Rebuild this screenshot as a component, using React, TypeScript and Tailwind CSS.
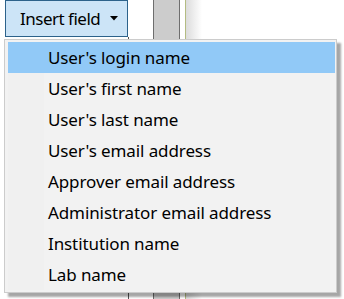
const fields = [
  "User's login name",
  "User's first name",
  "User's last name",
  "User's email address",
  'Approver email address',
  'Administrator email address',
  'Institution name',
  'Lab name',
];

const font = { fontFamily: '"Noto Sans", "Open Sans", sans-serif' };

export default function App() {
  return (
    <div className="relative w-[344px] h-[299px] bg-white overflow-hidden" style={font}>
      {/* window behind the menu */}
      <div className="flex h-full">
        <div className="w-[5px]" />
        <div className="flex flex-col w-[124px]">
          <button className="flex w-[123px] items-center h-[37px] border border-[#2c628b] bg-[#cce4f7] pl-[14px] pr-[9px] text-[17px] tracking-[-0.5px] text-black">
            <span>Insert field</span>
            <svg className="ml-auto" width="8" height="5" viewBox="0 0 8 5">
              <path d="M0 0h8L4 4.5z" fill="#000" />
            </svg>
          </button>
          <div className="flex-1 border-r border-[#555555]" />
        </div>
        <div className="w-[25px] border-r border-[#6e6e6e]" />
        <div className="w-[25px] bg-[#cccccc]" />
        <div className="w-px bg-[#6e6e6e]" />
        <div className="w-[5px]" />
        <div className="w-px bg-[#b4bc82]" />
        <div className="w-[16px] bg-gradient-to-r from-[#dcdcdc] to-white" />
      </div>

      {/* dropdown menu */}
      <div className="absolute left-[4px] top-[39px] w-[333px] border border-[#cccccc] bg-[#f2f2f2] py-[2px] pl-[3px] pr-px shadow-[4px_4px_2px_rgba(0,0,0,0.35)]">
        {fields.map((f, i) => (
          <div
            key={f}
            className={`flex h-[31px] items-center text-[17px] tracking-[-0.1px] text-black ${i === 0 ? 'bg-[#91c9f7]' : ''}`}
          >
            <div className={`h-full w-[36px] ${i === 0 ? '' : 'bg-[#f0f0f0]'}`} />
            <span className="pl-[4px] leading-none">{f}</span>
          </div>
        ))}
      </div>
    </div>
  );
}
